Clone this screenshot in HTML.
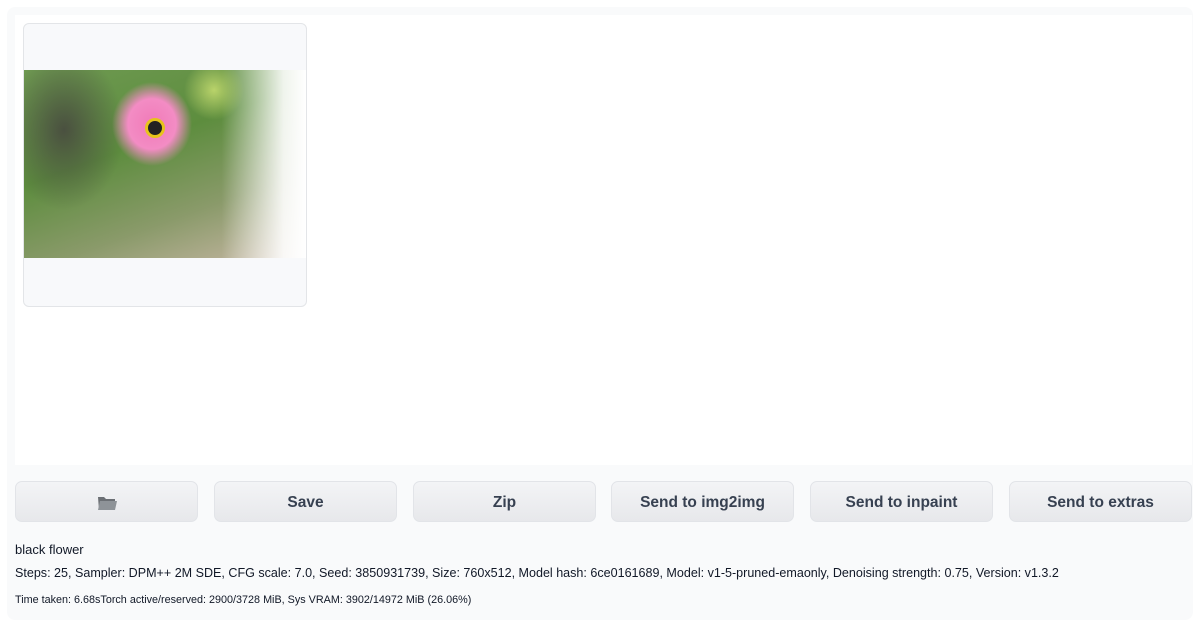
<!DOCTYPE html>
<html><head><style>
body{margin:0;width:1199px;height:622px;background:#fff;font-family:"Liberation Sans",sans-serif;position:relative;overflow:hidden}
.outer{position:absolute;left:7px;top:7px;width:1186px;height:613px;background:#f9fafb;border-radius:8px}
.panel{position:absolute;left:15px;top:15px;width:1177px;height:450px;background:#fff}
.thumb{position:absolute;left:23px;top:23px;width:282px;height:282px;background:#f8f9fb;border:1px solid #e3e5e8;border-radius:6px;overflow:hidden}
.img{position:absolute;left:0px;top:46px;width:282px;height:188px;background:
radial-gradient(ellipse 40px 42px at 128px 54px,#f07ab8 0,#f38cc4 60%,transparent 100%),
radial-gradient(ellipse 30px 30px at 190px 20px,#b9d36a,transparent),
linear-gradient(90deg,transparent 70%,rgba(255,255,255,.9) 92%,#fff),
radial-gradient(ellipse 60px 80px at 40px 60px,#4a5040,transparent),
linear-gradient(160deg,#6f9a52,#5d8d3e 40%,#8a9a6a 70%,#c9b8a6)}
.dot{position:absolute;left:121px;top:48px;width:14px;height:14px;border-radius:50%;background:#222;border:3px solid #e6c41a}
.btn{position:absolute;top:481px;height:41px;width:183px;background:linear-gradient(#f3f4f6,#e7e8eb);border:1px solid #e2e4e8;border-radius:7px;box-sizing:border-box;text-align:center;line-height:42px;font-weight:bold;font-size:15.5px;color:#374151}
.t{position:absolute;left:15px;color:#111827}
</style></head><body>
<div class="outer"></div>
<div class="panel"></div>
<div class="thumb"><div class="img"><div class="dot"></div></div></div>
<div class="btn" style="left:15px"><svg width="22" height="18" viewBox="0 0 22 18" style="vertical-align:middle"><path d="M2 3h6l2 2h9v11H3z" fill="#6b6f74"/><path d="M4 7h17l-2 9H2z" fill="#8e9398"/></svg></div>
<div class="btn" style="left:214px">Save</div>
<div class="btn" style="left:413px">Zip</div>
<div class="btn" style="left:611px">Send to img2img</div>
<div class="btn" style="left:810px">Send to inpaint</div>
<div class="btn" style="left:1009px">Send to extras</div>
<div class="t" style="top:542px;font-size:13px">black flower</div>
<div class="t" style="top:566px;font-size:12.55px">Steps: 25, Sampler: DPM++ 2M SDE, CFG scale: 7.0, Seed: 3850931739, Size: 760x512, Model hash: 6ce0161689, Model: v1-5-pruned-emaonly, Denoising strength: 0.75, Version: v1.3.2</div>
<div class="t" style="top:594px;font-size:10.8px">Time taken: 6.68sTorch active/reserved: 2900/3728 MiB, Sys VRAM: 3902/14972 MiB (26.06%)</div>
</body></html>
